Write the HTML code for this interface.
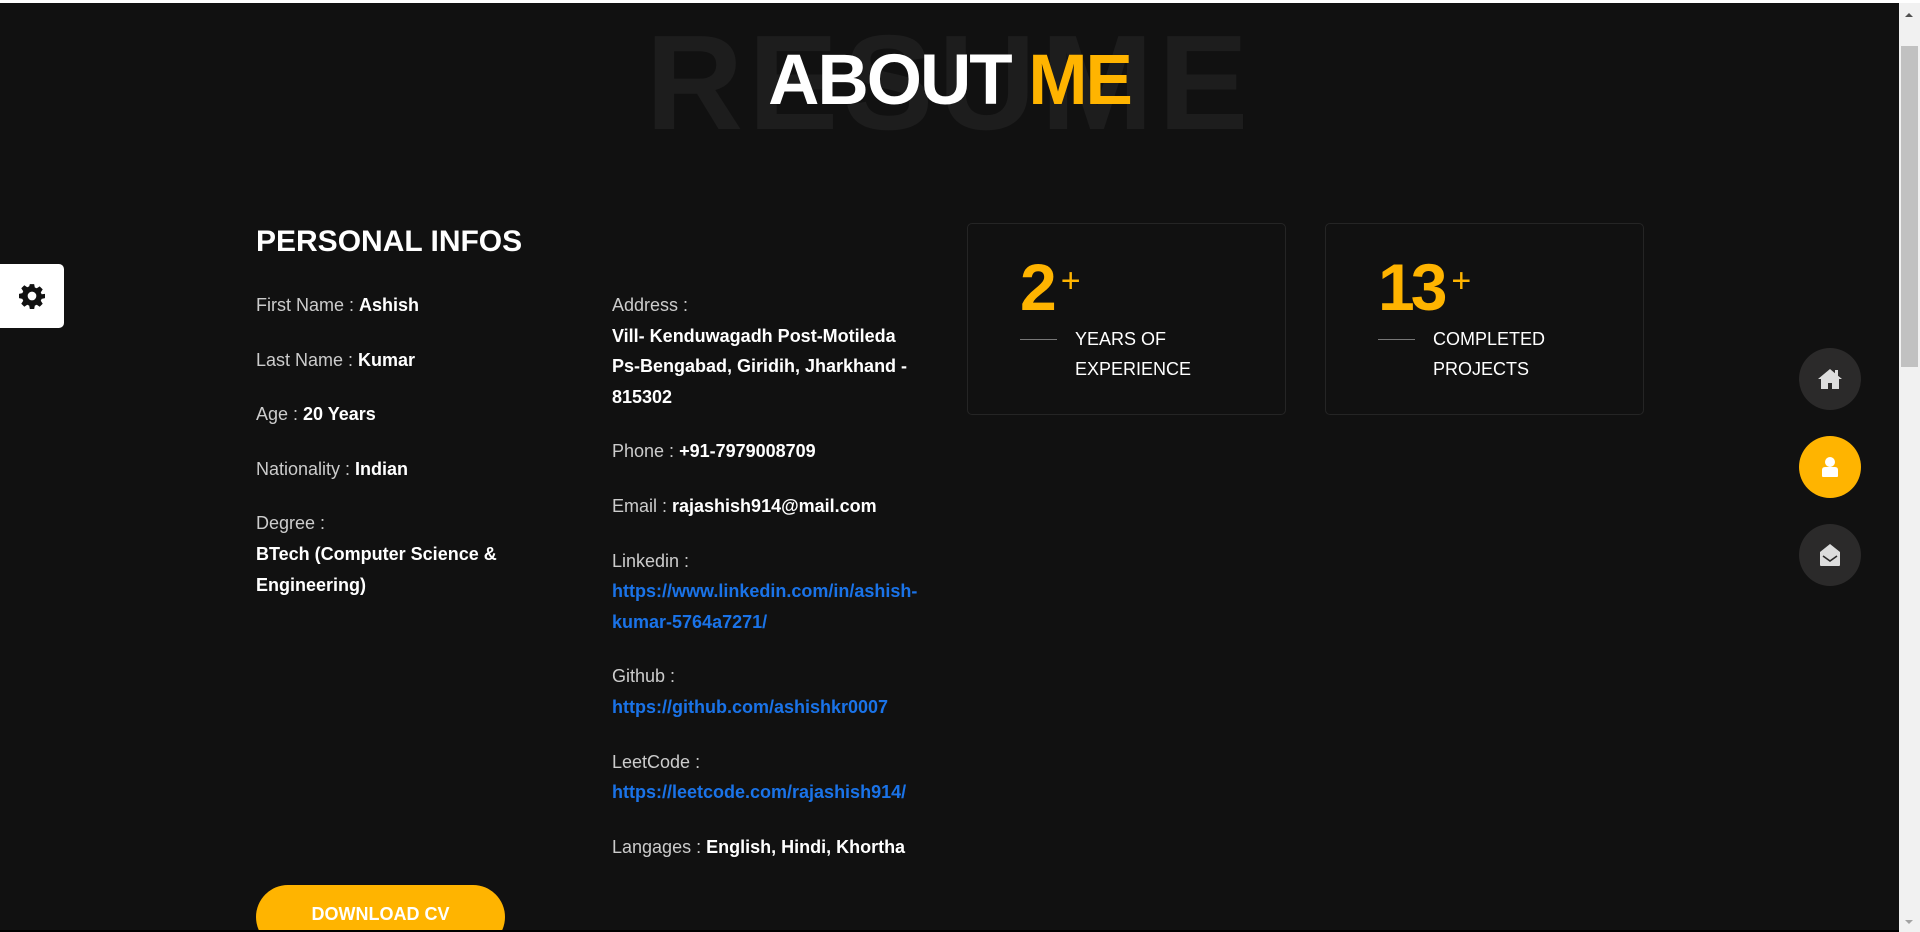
<!DOCTYPE html>
<html><head><meta charset="utf-8"><style>
*{margin:0;padding:0;box-sizing:border-box}
html,body{width:1920px;height:932px;overflow:hidden;background:#111}
body{position:relative;font-family:"Liberation Sans",sans-serif;color:#fff}
.topline{position:absolute;left:0;top:0;width:1920px;height:3px;background:#fff}
.sb{position:absolute;left:1899px;top:3px;width:21px;height:929px;background:#f1f1f1}
.sb .th{position:absolute;left:2px;top:43px;width:17px;height:321px;background:#c1c1c1}
.sb .up{position:absolute;left:6px;top:10px;width:0;height:0;border-left:4px solid transparent;border-right:4px solid transparent;border-bottom:4px solid #505050}
.sb .dn{position:absolute;left:6px;bottom:8px;width:0;height:0;border-left:4px solid transparent;border-right:4px solid transparent;border-top:4px solid #a3a3a3}
.bg{position:absolute;left:0;width:1899px;top:15px;text-align:center;font-weight:bold;font-size:135px;color:#1d1d1d;letter-spacing:5px;line-height:135px}
.title{position:absolute;left:0;width:1899px;top:41px;text-align:center;font-weight:bold;font-size:71px;line-height:80px;letter-spacing:-2px}
.title span{color:#ffb400}
h2{position:absolute;left:256px;top:224px;font-size:30px;font-weight:bold;line-height:36px}
.col{position:absolute;font-size:18px;line-height:30.6px;color:#ccc}
.col p{margin-bottom:24px}
.col b{color:#fff}
.col a{color:#1a73e8;font-weight:bold;text-decoration:none;display:block}
.c1{left:256px;top:290px;width:300px}
.c2{left:612px;top:290px;width:345px}
.card{position:absolute;top:223px;width:319px;height:192px;border:1px solid #252525;border-radius:5px}
.num{position:absolute;left:52px;top:28px;font-size:66px;font-weight:bold;color:#ffb400;line-height:70px;letter-spacing:-4px}
.num sup{font-size:34px;font-weight:normal;vertical-align:top;position:relative;top:-6px;margin-left:8px;letter-spacing:0}
.ln{position:absolute;left:52px;top:115px;width:37px;height:1px;background:#777}
.lbl{position:absolute;left:107px;top:100px;font-size:18px;line-height:30px;text-transform:uppercase}
.btn{position:absolute;left:256px;top:885px;width:249px;height:64px;border-radius:32px;background:#ffb400;color:#fff;font-weight:bold;font-size:18px;text-align:center;line-height:58px}
.gear{position:absolute;left:0;top:264px;width:64px;height:64px;background:#fff;border-radius:0 5px 5px 0;display:flex;align-items:center;justify-content:center}
.nav{position:absolute;left:1799px;width:62px;height:62px;border-radius:50%;background:#2b2a2a;display:flex;align-items:center;justify-content:center}
.botline{position:absolute;left:0;top:930px;width:1899px;height:2px;background:#000}
</style></head><body>
<div class="topline"></div>
<div class="bg">RESUME</div>
<div class="title">ABOUT <span>ME</span></div>
<h2>PERSONAL INFOS</h2>
<div class="col c1">
<p>First Name : <b>Ashish</b></p>
<p>Last Name : <b>Kumar</b></p>
<p>Age : <b>20 Years</b></p>
<p>Nationality : <b>Indian</b></p>
<p>Degree :<br><b>BTech (Computer Science &amp;<br>Engineering)</b></p>
</div>
<div class="col c2">
<p>Address :<br><b>Vill- Kenduwagadh Post-Motileda<br>Ps-Bengabad, Giridih, Jharkhand -<br>815302</b></p>
<p>Phone : <b>+91-7979008709</b></p>
<p>Email : <b>rajashish914@mail.com</b></p>
<p>Linkedin :<br><a>https://www.linkedin.com/in/ashish-<br>kumar-5764a7271/</a></p>
<p>Github :<br><a>https://github.com/ashishkr0007</a></p>
<p>LeetCode :<br><a>https://leetcode.com/rajashish914/</a></p>
<p>Langages : <b>English, Hindi, Khortha</b></p>
</div>
<div class="card" style="left:967px"><div class="num">2<sup>+</sup></div><div class="ln"></div><div class="lbl">Years of<br>experience</div></div>
<div class="card" style="left:1325px"><div class="num">13<sup>+</sup></div><div class="ln"></div><div class="lbl">Completed<br>projects</div></div>
<div class="btn">DOWNLOAD CV</div>
<div class="gear"><svg width="26" height="26" viewBox="0 0 24 24"><path fill="#111" d="M10 1h4l.6 3.1 1.8.8 2.7-1.8 2.8 2.8-1.8 2.7.8 1.8L24 10v4l-3.1.6-.8 1.8 1.8 2.7-2.8 2.8-2.7-1.8-1.8.8L14 24h-4l-.6-3.1-1.8-.8-2.7 1.8-2.8-2.8 1.8-2.7-.8-1.8L0 14v-4l3.1-.6.8-1.8-1.8-2.7 2.8-2.8 2.7 1.8 1.8-.8zM12 8a4 4 0 100 8 4 4 0 000-8z"/></svg></div>
<div class="nav" style="top:348px"><svg width="24" height="22" viewBox="0 0 24 22"><path fill="#ddd" d="M12 1L0 11h3v10h7v-6h4v6h7V11h3l-4-3.3V2h-3v3.2z"/></svg></div>
<div class="nav" style="top:436px;background:#ffb400"><svg width="20" height="22" viewBox="0 0 20 22"><circle cx="10" cy="6" r="5" fill="#fff"/><path fill="#fff" d="M2 14q0-3 3-3h10q3 0 3 3v6q0 1-1 1H3q-1 0-1-1z"/></svg></div>
<div class="nav" style="top:524px"><svg width="24" height="24" viewBox="0 0 24 24"><path fill="#ddd" d="M2 9L12 1l10 8v13q0 1-1 1H3q-1 0-1-1z"/><path fill="none" stroke="#2b2a2a" stroke-width="1.6" d="M5 13l7 5 7-5"/></svg></div>
<div class="sb"><div class="up"></div><div class="th"></div><div class="dn"></div></div>
<div class="botline"></div>
</body></html>
